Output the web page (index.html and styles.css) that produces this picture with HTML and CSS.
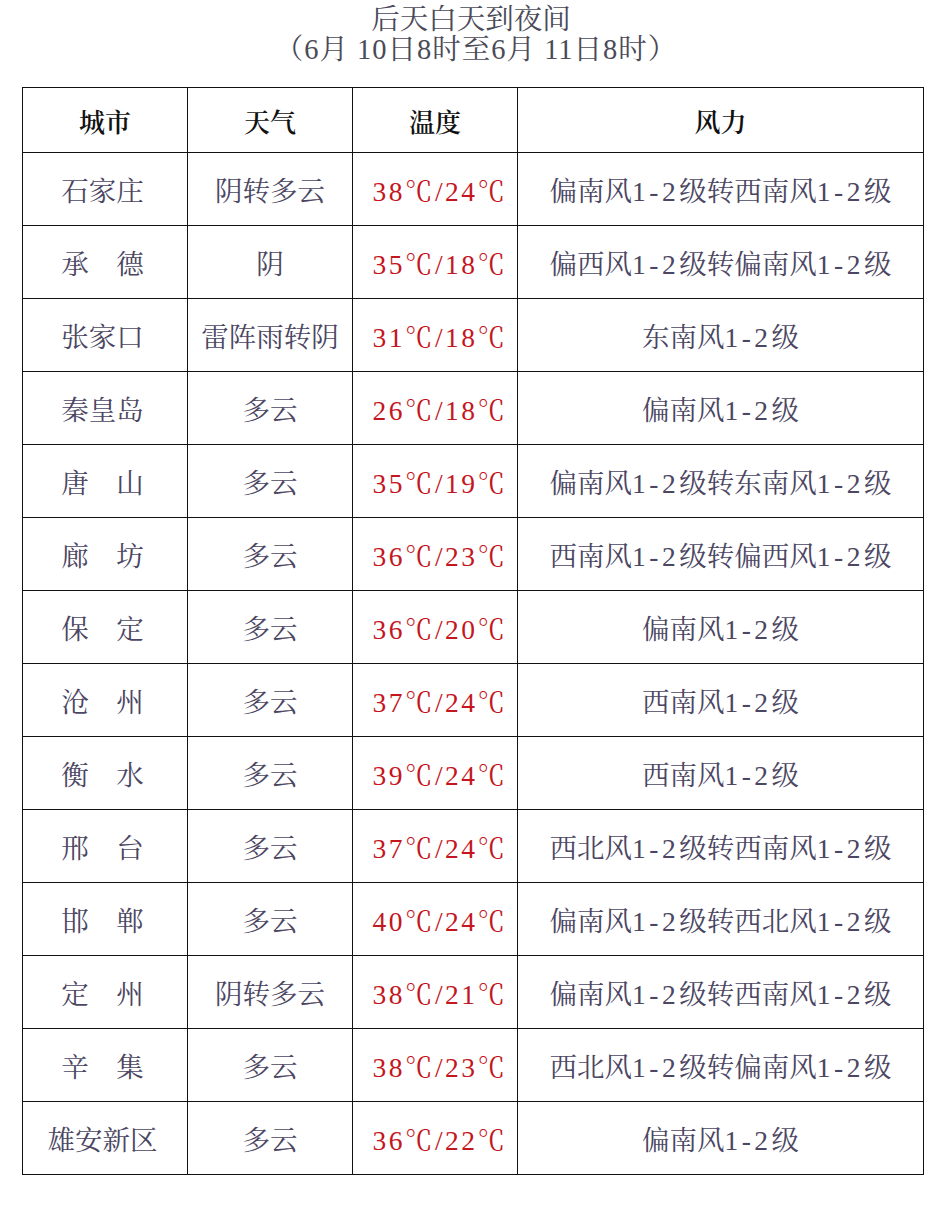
FILE: index.html
```html
<!DOCTYPE html>
<html lang="zh-CN">
<head>
<meta charset="utf-8">
<title>后天白天到夜间</title>
<link rel="stylesheet" href="styles.css">
</head>
<body>
<div class="page">
  <div class="title">
    <div class="title-line">后天白天到夜间</div>
    <div class="title-line sub">（6月 10日8时至6月 11日8时）</div>
  </div>
  <table class="weather">
    <colgroup>
      <col class="c-city"><col class="c-wx"><col class="c-temp"><col class="c-wind">
    </colgroup>
    <thead>
      <tr><th>城市</th><th>天气</th><th>温度</th><th>风力</th></tr>
    </thead>
    <tbody>
      <tr><td class="city">石家庄</td><td>阴转多云</td><td class="temp">38℃/24℃</td><td>偏南风<span class="n">1-2</span>级转西南风<span class="n">1-2</span>级</td></tr>
      <tr><td class="city">承　德</td><td>阴</td><td class="temp">35℃/18℃</td><td>偏西风<span class="n">1-2</span>级转偏南风<span class="n">1-2</span>级</td></tr>
      <tr><td class="city">张家口</td><td>雷阵雨转阴</td><td class="temp">31℃/18℃</td><td>东南风<span class="n">1-2</span>级</td></tr>
      <tr><td class="city">秦皇岛</td><td>多云</td><td class="temp">26℃/18℃</td><td>偏南风<span class="n">1-2</span>级</td></tr>
      <tr><td class="city">唐　山</td><td>多云</td><td class="temp">35℃/19℃</td><td>偏南风<span class="n">1-2</span>级转东南风<span class="n">1-2</span>级</td></tr>
      <tr><td class="city">廊　坊</td><td>多云</td><td class="temp">36℃/23℃</td><td>西南风<span class="n">1-2</span>级转偏西风<span class="n">1-2</span>级</td></tr>
      <tr><td class="city">保　定</td><td>多云</td><td class="temp">36℃/20℃</td><td>偏南风<span class="n">1-2</span>级</td></tr>
      <tr><td class="city">沧　州</td><td>多云</td><td class="temp">37℃/24℃</td><td>西南风<span class="n">1-2</span>级</td></tr>
      <tr><td class="city">衡　水</td><td>多云</td><td class="temp">39℃/24℃</td><td>西南风<span class="n">1-2</span>级</td></tr>
      <tr><td class="city">邢　台</td><td>多云</td><td class="temp">37℃/24℃</td><td>西北风<span class="n">1-2</span>级转西南风<span class="n">1-2</span>级</td></tr>
      <tr><td class="city">邯　郸</td><td>多云</td><td class="temp">40℃/24℃</td><td>偏南风<span class="n">1-2</span>级转西北风<span class="n">1-2</span>级</td></tr>
      <tr><td class="city">定　州</td><td>阴转多云</td><td class="temp">38℃/21℃</td><td>偏南风<span class="n">1-2</span>级转西南风<span class="n">1-2</span>级</td></tr>
      <tr><td class="city">辛　集</td><td>多云</td><td class="temp">38℃/23℃</td><td>西北风<span class="n">1-2</span>级转偏南风<span class="n">1-2</span>级</td></tr>
      <tr><td class="city">雄安新区</td><td>多云</td><td class="temp">36℃/22℃</td><td>偏南风<span class="n">1-2</span>级</td></tr>
    </tbody>
  </table>
</div>
</body>
</html>
```

FILE: styles.css
```css
html, body {
  margin: 0;
  padding: 0;
  background: #ffffff;
}

.page {
  width: 942px;
  padding-top: 5px;
  font-family: "Liberation Serif", "Noto Serif CJK SC", "Noto Sans CJK SC", serif;
}

.title {
  text-align: center;
  color: #4a4a58;
  font-size: 28.5px;
  line-height: 30px;
}

.title-line {
  white-space: nowrap;
}

.title-line.sub {
  padding-left: 10px;
  letter-spacing: 1px;
}

.weather {
  margin: 22px 0 0 22px;
  width: 901px;
  border-collapse: collapse;
  table-layout: fixed;
}

.c-city, .c-wx, .c-temp { width: 165px; }
.c-wind { width: 406px; }

.weather th,
.weather td {
  border: 1.5px solid #111111;
  text-align: center;
  vertical-align: middle;
  padding: 0;
  white-space: nowrap;
}

.weather th {
  height: 64px;
  font-size: 26px;
  font-weight: 600;
  color: #111111;
}

.weather td {
  height: 72px;
  font-size: 27.5px;
  color: #4b4662;
}

.weather td.city {
  padding-right: 5px;
}

.weather td.temp {
  color: #c4161e;
  letter-spacing: 2.5px;
  padding-left: 10px;
}

.n {
  letter-spacing: 3.5px;
}
```
